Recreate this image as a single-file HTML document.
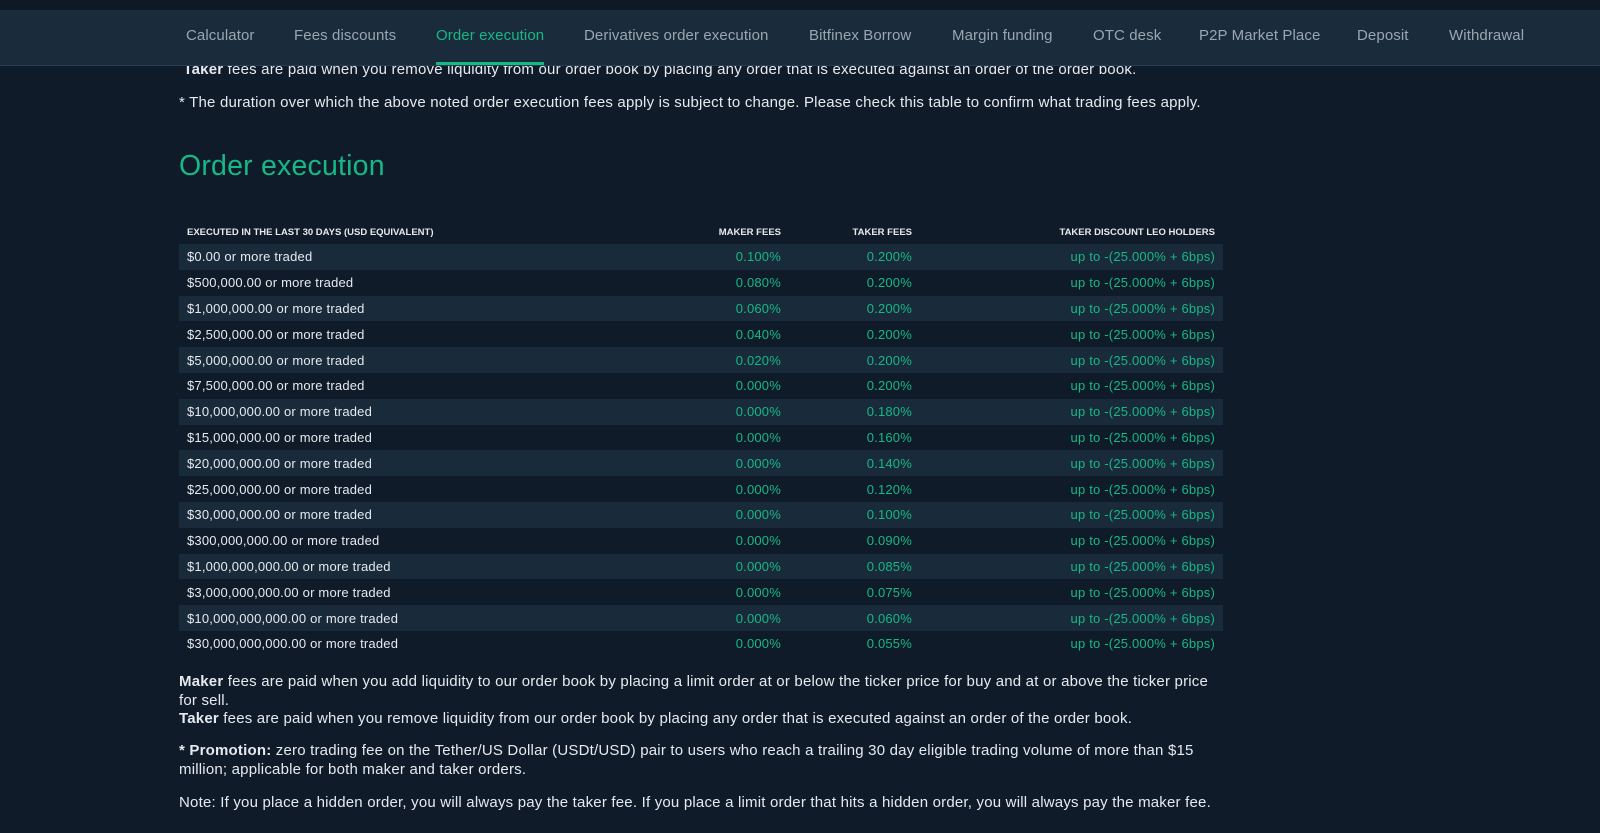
<!DOCTYPE html>
<html><head><meta charset="utf-8"><style>
*{margin:0;padding:0;box-sizing:border-box}
body{width:1600px;height:833px;overflow:hidden;background:#0f1b29;font-family:"Liberation Sans",Arial,sans-serif;color:#e6eaee;position:relative}
.top{position:absolute;left:0;top:0;width:1600px;height:10px;background:#0e1925}
.nav{position:absolute;left:0;top:10px;width:1600px;height:56px;background:#1a2b3c;border-bottom:1px solid #2a3d50;z-index:2}
.nav span{position:absolute;top:17px;font-size:15px;color:#9aa6b2;white-space:nowrap;letter-spacing:0.1px}
.nav span.a{color:#16b886}
.nav .ul{position:absolute;left:436px;top:52px;width:108px;height:3px;background:#16b886}
.c{position:absolute;left:179px;width:1044px;font-size:15px;line-height:18.5px;letter-spacing:0.2px}
h1{position:absolute;left:179px;top:150px;font-size:28.5px;font-weight:normal;color:#16b886;letter-spacing:0.2px}
table{position:absolute;left:179px;top:220px;width:1044px;border-collapse:collapse;font-size:13px;letter-spacing:0.2px;table-layout:fixed}
th{font-size:9.5px;font-weight:bold;color:#e6eaee;height:24px;padding:0 8px;text-align:right;letter-spacing:0}
th:first-child{text-align:left}
td{height:25.8px;padding:0 8px;text-align:right;color:#16b886}
td:first-child{text-align:left;color:#e6eaee}
tbody tr:nth-child(odd){background:#192a3b}
</style></head><body>
<div class="top"></div>
<div class="c" style="top:61px">&nbsp;<b>Taker</b> fees are paid when you remove liquidity from our order book by placing any order that is executed against an order of the order book.</div>
<div class="nav">
<span style="left:186px">Calculator</span>
<span style="left:294px">Fees discounts</span>
<span class="a" style="left:436px">Order execution</span>
<span style="left:584px">Derivatives order execution</span>
<span style="left:809px">Bitfinex Borrow</span>
<span style="left:952px">Margin funding</span>
<span style="left:1093px">OTC desk</span>
<span style="left:1199px">P2P Market Place</span>
<span style="left:1357px">Deposit</span>
<span style="left:1449px">Withdrawal</span>
<div class="ul"></div>
</div>
<div class="c" style="top:94px">* The duration over which the above noted order execution fees apply is subject to change. Please check this table to confirm what trading fees apply.</div>
<h1>Order execution</h1>
<table>
<colgroup><col style="width:479px"><col style="width:131px"><col style="width:131px"><col style="width:303px"></colgroup>
<thead><tr><th>EXECUTED IN THE LAST 30 DAYS (USD EQUIVALENT)</th><th>MAKER FEES</th><th>TAKER FEES</th><th>TAKER DISCOUNT LEO HOLDERS</th></tr></thead>
<tbody>
<tr><td>$0.00 or more traded</td><td>0.100%</td><td>0.200%</td><td>up to -(25.000% + 6bps)</td></tr>
<tr><td>$500,000.00 or more traded</td><td>0.080%</td><td>0.200%</td><td>up to -(25.000% + 6bps)</td></tr>
<tr><td>$1,000,000.00 or more traded</td><td>0.060%</td><td>0.200%</td><td>up to -(25.000% + 6bps)</td></tr>
<tr><td>$2,500,000.00 or more traded</td><td>0.040%</td><td>0.200%</td><td>up to -(25.000% + 6bps)</td></tr>
<tr><td>$5,000,000.00 or more traded</td><td>0.020%</td><td>0.200%</td><td>up to -(25.000% + 6bps)</td></tr>
<tr><td>$7,500,000.00 or more traded</td><td>0.000%</td><td>0.200%</td><td>up to -(25.000% + 6bps)</td></tr>
<tr><td>$10,000,000.00 or more traded</td><td>0.000%</td><td>0.180%</td><td>up to -(25.000% + 6bps)</td></tr>
<tr><td>$15,000,000.00 or more traded</td><td>0.000%</td><td>0.160%</td><td>up to -(25.000% + 6bps)</td></tr>
<tr><td>$20,000,000.00 or more traded</td><td>0.000%</td><td>0.140%</td><td>up to -(25.000% + 6bps)</td></tr>
<tr><td>$25,000,000.00 or more traded</td><td>0.000%</td><td>0.120%</td><td>up to -(25.000% + 6bps)</td></tr>
<tr><td>$30,000,000.00 or more traded</td><td>0.000%</td><td>0.100%</td><td>up to -(25.000% + 6bps)</td></tr>
<tr><td>$300,000,000.00 or more traded</td><td>0.000%</td><td>0.090%</td><td>up to -(25.000% + 6bps)</td></tr>
<tr><td>$1,000,000,000.00 or more traded</td><td>0.000%</td><td>0.085%</td><td>up to -(25.000% + 6bps)</td></tr>
<tr><td>$3,000,000,000.00 or more traded</td><td>0.000%</td><td>0.075%</td><td>up to -(25.000% + 6bps)</td></tr>
<tr><td>$10,000,000,000.00 or more traded</td><td>0.000%</td><td>0.060%</td><td>up to -(25.000% + 6bps)</td></tr>
<tr><td>$30,000,000,000.00 or more traded</td><td>0.000%</td><td>0.055%</td><td>up to -(25.000% + 6bps)</td></tr>
</tbody></table>
<div class="c" style="top:673px"><b>Maker</b> fees are paid when you add liquidity to our order book by placing a limit order at or below the ticker price for buy and at or above the ticker price for sell.<br><b>Taker</b> fees are paid when you remove liquidity from our order book by placing any order that is executed against an order of the order book.</div>
<div class="c" style="top:742px"><b>* Promotion:</b> zero trading fee on the Tether/US Dollar (USDt/USD) pair to users who reach a trailing 30 day eligible trading volume of more than $15 million; applicable for both maker and taker orders.</div>
<div class="c" style="top:794px">Note: If you place a hidden order, you will always pay the taker fee. If you place a limit order that hits a hidden order, you will always pay the maker fee.</div>
</body></html>
